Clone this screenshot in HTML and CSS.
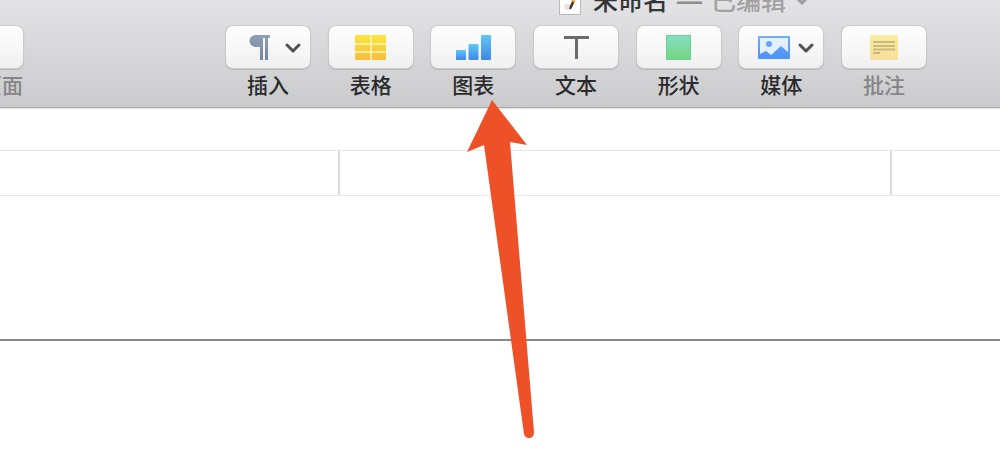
FILE: index.html
```html
<!DOCTYPE html>
<html lang="zh-CN">
<head>
<meta charset="utf-8">
<title>未命名</title>
<link rel="stylesheet" href="styles.css">
</head>
<body>
<header class="window-bar">
  <h1 class="title">
    <svg class="doc-icon" width="24" height="30" viewBox="0 0 24 30" aria-hidden="true">
      <path d="M1 0h22v29H1z" fill="#b9b9bb"/><path d="M2 0h20v28H2z" fill="#fff"/>
      <path d="M6 18h7v5l-6 1z" fill="#e6e2de"/><path d="M13 21l3-7" stroke="#ed9b32" stroke-width="3"/><path d="M12 23l3-7" stroke="#333" stroke-width="2"/>
    </svg>
    <span class="name">未命名</span>
    <span class="dash">—</span>
    <button class="edited" type="button">已编辑
      <svg width="12" height="8" viewBox="0 0 12 8" aria-hidden="true"><path d="M1 1l5 5 5-5" fill="none" stroke="#9d9d9f" stroke-width="3"/></svg>
    </button>
  </h1>
  <div class="toolbar">
    <div class="tool muted"><button class="key" type="button" id="page" aria-label="添加页面"></button><label for="page">添加页面</label></div>
    <div class="group">
      <div class="tool"><button class="key" type="button" id="insert">
        <svg width="84" height="42" viewBox="0 0 84 42" aria-hidden="true">
          <defs><linearGradient id="slate" x2="0" y2="1"><stop stop-color="#8fa0b5"/><stop offset="1" stop-color="#74869d"/></linearGradient></defs>
          <path d="M29 9h14q1 0 1 1v1q0 1-1 1h-1v22h-3V12h-2v22h-3V21h-4a6 6 0 0 1-1-12z" fill="url(#slate)"/>
          <path class="chevron" d="M61 19l6 6 6-6"/>
        </svg></button><label for="insert">插入</label></div>
      <div class="tool"><button class="key" type="button" id="table">
        <svg width="84" height="42" viewBox="0 0 84 42" aria-hidden="true">
          <defs><linearGradient id="gold" x2="0" y2="1"><stop stop-color="#fbe63d"/><stop offset="1" stop-color="#f8bd3d"/></linearGradient></defs>
          <rect x="26" y="9" width="31" height="25" rx="1" fill="url(#gold)"/>
          <path d="M42 9v25M26 18h31M26 26h31" stroke="#fff5bd" stroke-width="1.500"/>
        </svg></button><label for="table">表格</label></div>
      <div class="tool"><button class="key" type="button" id="chart">
        <svg width="84" height="42" viewBox="0 0 84 42" aria-hidden="true">
          <defs><linearGradient id="blue" x2="0" y2="1"><stop stop-color="#60c7f4"/><stop offset="1" stop-color="#3f87e8"/></linearGradient></defs>
          <g fill="url(#blue)"><rect x="25" y="24" width="10" height="10" rx="1"/><rect x="37.500" y="18" width="10" height="16" rx="1"/><rect x="50" y="9" width="10" height="25" rx="1"/></g>
        </svg></button><label for="chart">图表</label></div>
      <div class="tool"><button class="key" type="button" id="text">
        <svg width="84" height="42" viewBox="0 0 84 42" aria-hidden="true"><path d="M30 10h25v3H44v20h-3V13H30z" fill="#6b6b6b"/></svg></button><label for="text">文本</label></div>
      <div class="tool"><button class="key" type="button" id="shape">
        <svg width="84" height="42" viewBox="0 0 84 42" aria-hidden="true">
          <defs><linearGradient id="green" x2="0" y2="1"><stop stop-color="#82dfc2"/><stop offset="1" stop-color="#76d47f"/></linearGradient></defs>
          <rect x="29.500" y="9.500" width="24" height="24" fill="url(#green)" stroke="#6dcf98"/>
        </svg></button><label for="shape">形状</label></div>
      <div class="tool"><button class="key" type="button" id="media">
        <svg width="84" height="42" viewBox="0 0 84 42" aria-hidden="true">
          <defs><linearGradient id="sky" x2="0" y2="1"><stop stop-color="#75adf8"/><stop offset="1" stop-color="#4b91f7"/></linearGradient></defs>
          <rect x="19" y="10" width="32" height="23" rx="1" fill="url(#sky)"/><path d="M21 12h28v14l-7-6-10 9-5-4-6 3z" fill="#e2effe"/><circle cx="30" cy="18" r="3" fill="#65a2f7"/>
          <path class="chevron" d="M61 19l6 6 6-6"/>
        </svg></button><label for="media">媒体</label></div>
      <div class="tool muted"><button class="key" type="button" id="comment">
        <svg width="84" height="42" viewBox="0 0 84 42" aria-hidden="true">
          <defs><linearGradient id="note" x2="0" y2="1"><stop stop-color="#f9ed9c"/><stop offset="1" stop-color="#f7de9b"/></linearGradient></defs>
          <rect x="28" y="9" width="28" height="25" rx="1" fill="url(#note)"/><path d="M31 16h22M31 20h22M31 23.500h22M31 27h7" stroke="#cdb780" stroke-width="2"/>
        </svg></button><label for="comment">批注</label></div>
    </div>
  </div>
</header>
<main class="page">
  <div class="page-header"><div class="cell"></div><div class="cell"></div><div class="cell"></div></div>
  <div class="body-area"></div>
  <svg class="arrow" width="68" height="340" viewBox="0 0 68 340" aria-hidden="true"><path d="M25 0L60 45 43 42 67 332Q67 338 62 338 58 338 57 334L17 45 0 52z" fill="#ee5127"/></svg>
</main>
</body>
</html>
```
FILE: styles.css
```css
* { box-sizing: border-box; }
body {
  display: flex;
  flex-direction: column;
  min-height: 100vh;
  margin: 0;
  background: #fff;
  font-family: "Liberation Sans", "Noto Sans CJK SC", sans-serif;
  overflow: hidden;
}
button { font: inherit; padding: 0; border: 0; background: none; }
.window-bar {
  background: linear-gradient(#e3e3e5, #cbcbcd);
  border-bottom: 1px solid #a9a9ac;
  box-shadow: 0 1px 1px #e4e4e4;
}
.title {
  display: flex;
  align-items: center;
  gap: 9px;
  height: 38px;
  margin: -18px 0 0 558px;
  font-size: 25px;
  line-height: 38px;
  font-weight: 400;
  color: #343436;
  white-space: nowrap;
}
.doc-icon { flex: none; }
.name { font-weight: 500; margin-left: 2px; }
.dash { color: #8e8e90; font-weight: 700; }
.edited { display: flex; align-items: center; gap: 10px; color: #a1a1a3; font-weight: 500; }
.toolbar {
  display: flex;
  gap: 203px;
  margin: 6px 0 0 -61px;
  padding-bottom: 6px;
}
.group { display: flex; flex: none; width: 700px; justify-content: space-between; }
.tool {
  display: flex;
  flex-direction: column;
  align-items: center;
  gap: 2px;
  flex: none;
  width: 84px;
  color: #2a2a2c;
  font-size: 21px;
  font-weight: 500;
  line-height: 31px;
  white-space: nowrap;
}
.key {
  display: block;
  width: 84px;
  height: 42px;
  border-radius: 7px;
  background: linear-gradient(#fefefe, #f0f0f0);
  box-shadow: 0 0 0 1px #cbcbcd, 0 1px 1px 1px #bababc;
}
.key svg { display: block; margin-top: -1px; }
.muted { color: #858587; }
.chevron { fill: none; stroke: #505050; stroke-width: 3; stroke-linecap: round; stroke-linejoin: round; }
.page { position: relative; flex: 1; padding-top: 42px; }
.page-header {
  display: grid;
  grid-template-columns: 338fr 552fr 110fr;
  height: 46px;
  border-top: 1px solid #e6e6e6;
  border-bottom: 1px solid #e6e6e6;
}
.cell + .cell { border-left: 2px solid #d7dbdf; }
.body-area { height: 145px; border-bottom: 2px solid #8a8888; }
.arrow { position: absolute; left: 467px; top: -8px; }
```
